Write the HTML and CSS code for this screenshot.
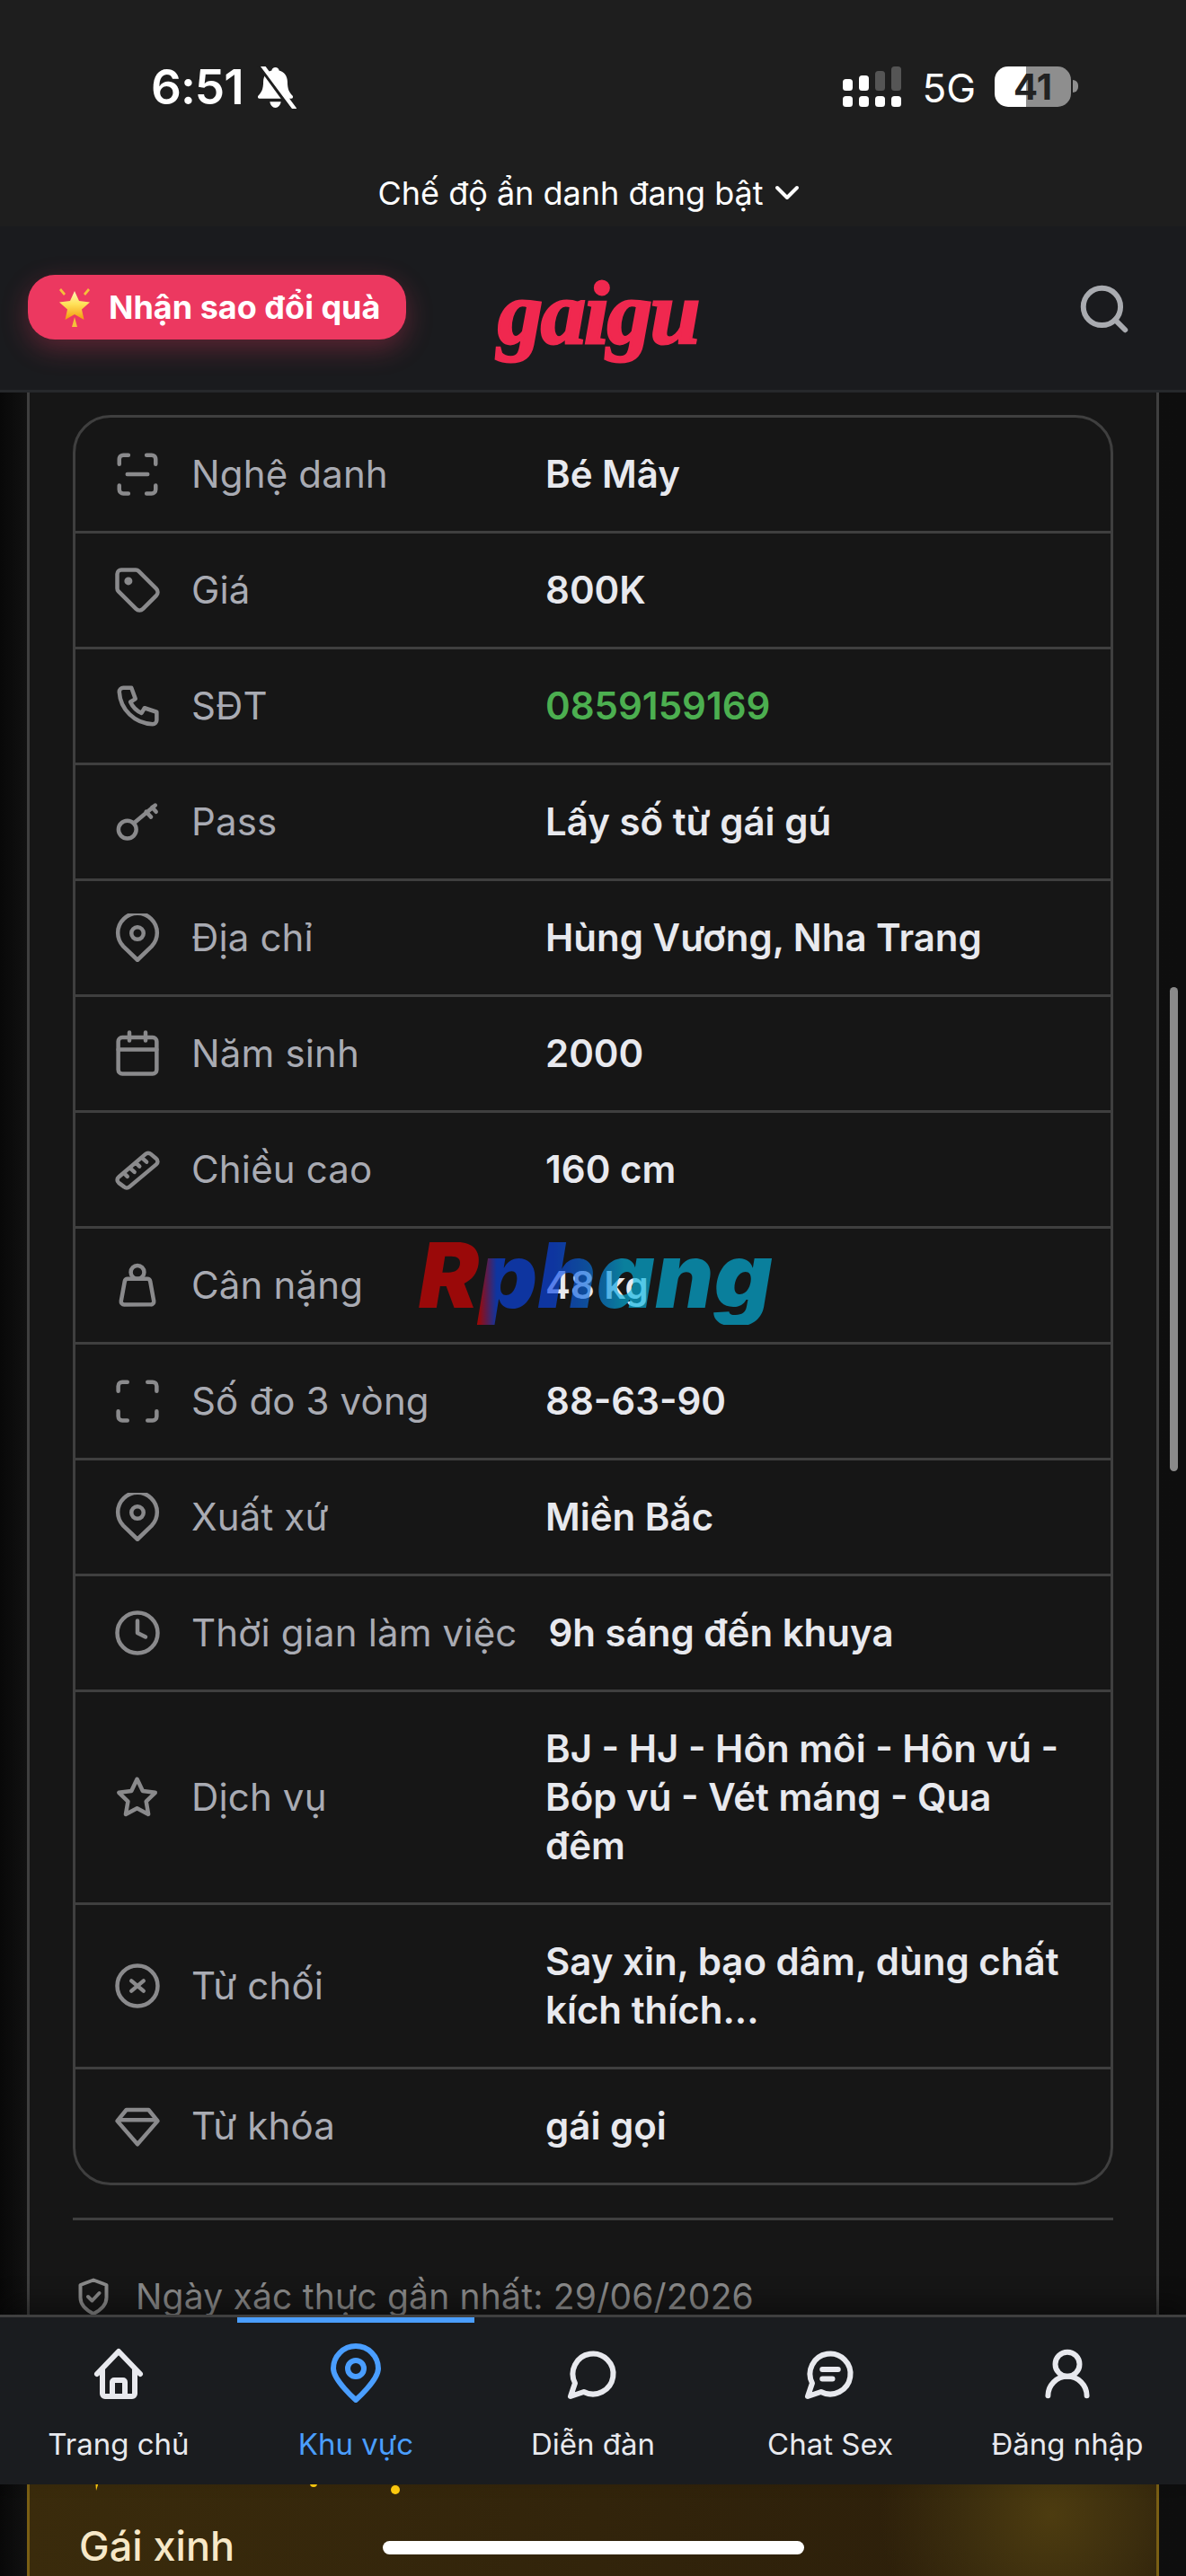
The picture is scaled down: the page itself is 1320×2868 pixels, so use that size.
FILE: index.html
```html
<!DOCTYPE html>
<html lang="vi">
<head>
<meta charset="utf-8">
<title>gaigu</title>
<link rel="stylesheet" href="styles.css">
</head>
<body>
<div class="page">
  <section class="status">
    <div class="status-row">
      <div class="status-left">
        <span class="time">6:51</span>
        <svg class="bell" viewBox="0 0 42 42"><path class="fill-w" d="M21 1c2 0 3.400 1.300 3.700 3 5.300 1.400 8.300 5.800 8.300 11 0 8 2 11 5 14 1 1 .5 3-1.200 3H5.200C3.500 32 3 30 4 29c3-3 5-6 5-14 0-5.200 3-9.600 8.300-11C17.600 2.300 19 1 21 1zM15.500 35h11c-.5 3.500-2.700 6-5.500 6s-5-2.500-5.500-6z"/><path class="slash-d" d="M5 -1 37 43"/><path class="slash-w" d="M8 -1 40 42"/></svg>
      </div>
      <div class="status-right">
        <svg class="signal" viewBox="0 0 65 45"><rect class="fill-w" x="0" y="14" width="11" height="13" rx="3.500"/><rect class="fill-w" x="18" y="10" width="11" height="17" rx="3.500"/><rect class="fill-dim" x="36" y="5" width="11" height="22" rx="3.500"/><rect class="fill-dim" x="54" y="0" width="11" height="27" rx="3.500"/><rect class="fill-w" x="0" y="33" width="11" height="12" rx="3.500"/><rect class="fill-w" x="18" y="33" width="11" height="12" rx="3.500"/><rect class="fill-w" x="36" y="33" width="11" height="12" rx="3.500"/><rect class="fill-w" x="54" y="33" width="11" height="12" rx="3.500"/></svg>
        <span class="net">5G</span>
        <div class="battery"><span class="battery-num">41</span></div>
        <span class="battery-nub"></span>
      </div>
    </div>
    <div class="incognito">
      <span>Chế độ ẩn danh đang bật</span>
      <svg class="chev" viewBox="0 0 28 20"><path d="M3 4 14 15 25 4"/></svg>
    </div>
  </section>

  <header class="topbar">
    <a class="promo">
      <svg class="promo-star" viewBox="0 0 42 44">
        <defs>
          <linearGradient id="sg" x1="0" y1="0" x2="0" y2="1"><stop offset="0" stop-color="#fff6b8"/><stop offset=".45" stop-color="#ffe25a"/><stop offset="1" stop-color="#f29a0c"/></linearGradient>
        </defs>
        <path fill="url(#sg)" d="M21 4l5 11 12 1.500-9 8 2.500 11.500L21 30l-10.500 6L13 24.500l-9-8L16 15z"/>
        <path fill="#f5c13a" d="M6 1l5 6-2 2-5-6zM36 1l-5 6 2 2 5-6zM21 33l3 11h-6z"/>
      </svg>
      <span>Nhận sao đổi quà</span>
    </a>
    <span class="logo">gaigu</span>
    <svg class="search" viewBox="0 0 24 24"><circle cx="11" cy="11" r="8"/><path d="m21 21-4.300-4.300"/></svg>
  </header>

  <main class="content">
    <article class="card">
      <div class="table">
        <div class="row">
          <svg class="ic" viewBox="0 0 24 24"><path d="M3 7V4.500A2 2 0 0 1 5 2.500h2.500M16.500 2.500H19a2 2 0 0 1 2 2V7M21 17.500V19.500a2 2 0 0 1-2 2h-2.500M7.500 21.500H5a2 2 0 0 1-2-2v-2M7 12h10"/></svg>
          <span class="lbl">Nghệ danh</span><span class="val">Bé Mây</span>
        </div>
        <div class="row">
          <svg class="ic" viewBox="0 0 24 24"><path d="M12.586 2.586A2 2 0 0 0 11.172 2H4a2 2 0 0 0-2 2v7.172a2 2 0 0 0 .586 1.414l8.704 8.704a2.426 2.426 0 0 0 3.420 0l6.580-6.580a2.426 2.426 0 0 0 0-3.420z"/><circle cx="7.500" cy="7.500" r="1"/></svg>
          <span class="lbl">Giá</span><span class="val">800K</span>
        </div>
        <div class="row">
          <svg class="ic" viewBox="0 0 24 24"><path d="M5 3h4l2 5.500-2.500 1.500a11 11 0 0 0 5.500 5.500l1.500-2.500 6 2v4a2 2 0 0 1-2 2A17 17 0 0 1 3 5a2 2 0 0 1 2-2"/></svg>
          <span class="lbl">SĐT</span><span class="val val-phone">0859159169</span>
        </div>
        <div class="row">
          <svg class="ic" viewBox="0 0 24 24"><circle cx="7" cy="15.800" r="4.400"/><path d="M10.200 12.700 20.800 3.800M16.300 7l2.400 2.600M19.200 4.800l2 2.200"/></svg>
          <span class="lbl">Pass</span><span class="val">Lấy số từ gái gú</span>
        </div>
        <div class="row">
          <svg class="ic" viewBox="0 0 24 24"><path d="M12 23 5 16.300A9.700 9.700 0 1 1 19 16.300z"/><circle cx="12" cy="9.800" r="3"/></svg>
          <span class="lbl">Địa chỉ</span><span class="val">Hùng Vương, Nha Trang</span>
        </div>
        <div class="row">
          <svg class="ic" viewBox="0 0 24 24"><rect x="2.500" y="4" width="19" height="18" rx="2"/><path d="M8 1.500v4M16 1.500v4M2.500 10h19"/></svg>
          <span class="lbl">Năm sinh</span><span class="val">2000</span>
        </div>
        <div class="row">
          <svg class="ic" viewBox="0 0 24 24"><path d="M2.700 15.800a1.800 1.800 0 0 0 0 2.800l2.700 2a2 2 0 0 0 2.600 0L21.300 9.500a1.800 1.800 0 0 0 0-2.800l-2.700-2.300a2 2 0 0 0-2.600 0zM8.500 11.500l2 1.800M11.500 9l1.500 1.500M14.500 6.500l2 1.800M5.500 14l1.500 1.500"/></svg>
          <span class="lbl">Chiều cao</span><span class="val">160 cm</span>
        </div>
        <div class="row">
          <svg class="ic" viewBox="0 0 24 24"><circle cx="12" cy="5.500" r="3.300"/><path d="M7.200 8.800h9.600a1.500 1.500 0 0 1 1.500 1.200l1.800 9.800a1.500 1.500 0 0 1-1.500 1.700h-13.200a1.500 1.500 0 0 1-1.500-1.700L5.700 10a1.500 1.500 0 0 1 1.500-1.200z"/></svg>
          <span class="lbl">Cân nặng</span><span class="val">48 kg</span>
        </div>
        <div class="row">
          <svg class="ic" viewBox="0 0 24 24"><path d="M2.500 7V4.500a2 2 0 0 1 2-2H7M17 2.500h2.500a2 2 0 0 1 2 2V7M21.500 17v2.500a2 2 0 0 1-2 2H17M7 21.500H4.500a2 2 0 0 1-2-2V17"/></svg>
          <span class="lbl">Số đo 3 vòng</span><span class="val">88-63-90</span>
        </div>
        <div class="row">
          <svg class="ic" viewBox="0 0 24 24"><path d="M12 23 5 16.300A9.700 9.700 0 1 1 19 16.300z"/><circle cx="12" cy="9.800" r="3"/></svg>
          <span class="lbl">Xuất xứ</span><span class="val">Miền Bắc</span>
        </div>
        <div class="row">
          <svg class="ic" viewBox="0 0 24 24"><circle cx="12" cy="12" r="10"/><path d="M12 6v6l4 2"/></svg>
          <span class="lbl lbl-long">Thời gian làm việc</span><span class="val">9h sáng đến khuya</span>
        </div>
        <div class="row">
          <svg class="ic" viewBox="0 0 24 24"><path d="M11.800 3l2.800 5.900 6.200.8-4.500 4.400 1.100 6.300-5.600-3-5.600 3 1.100-6.300-4.500-4.400 6.200-.8z"/></svg>
          <span class="lbl">Dịch vụ</span><span class="val">BJ - HJ - Hôn môi - Hôn vú - Bóp vú - Vét máng - Qua đêm</span>
        </div>
        <div class="row">
          <svg class="ic" viewBox="0 0 24 24"><circle cx="12" cy="12" r="10"/><path d="m15 9.500-6 5M9 9.500l6 5"/></svg>
          <span class="lbl">Từ chối</span><span class="val">Say xỉn, bạo dâm, dùng chất kích thích...</span>
        </div>
        <div class="row">
          <svg class="ic" viewBox="0 0 24 24"><path d="M6.500 4h11l4.500 5.500L12 21 2 9.500zM3 9h18"/></svg>
          <span class="lbl">Từ khóa</span><span class="val">gái gọi</span>
        </div>
      </div>
      <div class="watermark">Rphang</div>
      <hr class="divider">
      <div class="verified">
        <svg class="shield" viewBox="0 0 34 42"><path d="M17 2.500 31.500 8v14c0 9-6.500 14-14.500 18C9 36 2.500 31 2.500 22V8z"/><path d="m11 21 4.500 4.500L23.500 17"/></svg>
        <span>Ngày xác thực gần nhất: 29/06/2026</span>
      </div>
    </article>

    <article class="gold-card">
      <svg class="sparks" viewBox="0 0 400 30"><path class="spark" d="M23 0h5l-4 13z"/><circle class="spark" cx="266" cy="5" r="4"/><circle class="spark" cx="357" cy="12" r="5"/></svg>
      <span class="gold-title">Gái xinh</span>
    </article>
  </main>

  <div class="scrollbar"></div>

  <nav class="tabbar">
    <a class="tab">
      <svg class="tab-ic" viewBox="0 0 72 72"><path d="M12 36 36 11l24 25M18 31v27a3 3 0 0 0 3 3h30a3 3 0 0 0 3-3V31M29 61V45a2 2 0 0 1 2-2h10a2 2 0 0 1 2 2v16"/></svg>
      <span>Trang chủ</span>
    </a>
    <a class="tab tab-on">
      <svg class="tab-ic" viewBox="0 0 72 72"><path d="M36 65C36 65 11 43 11 30a25 25 0 0 1 50 0C61 43 36 65 36 65z"/><circle cx="36" cy="30" r="9"/></svg>
      <span>Khu vực</span>
    </a>
    <a class="tab">
      <svg class="tab-ic" viewBox="0 0 72 72"><g transform="translate(6 6) scale(2.500)"><path class="thin" d="M7.900 20A9 9 0 1 0 4 16.100L2 22Z"/></g></svg>
      <span>Diễn đàn</span>
    </a>
    <a class="tab">
      <svg class="tab-ic" viewBox="0 0 72 72"><g transform="translate(6 6) scale(2.500)"><path class="thin" d="M7.900 20A9 9 0 1 0 4 16.100L2 22Z"/><path class="thin" d="M8.500 10h7M8.500 14.200h4.500"/></g></svg>
      <span>Chat Sex</span>
    </a>
    <a class="tab">
      <svg class="tab-ic" viewBox="0 0 72 72"><g transform="translate(3.600 3.600) scale(2.700)"><circle class="thin2" cx="12" cy="8" r="5"/><path class="thin2" d="M20 21a8 8 0 0 0-16 0"/></g></svg>
      <span>Đăng nhập</span>
    </a>
  </nav>
  <div class="home-bar"></div>
</div>
</body>
</html>
```

FILE: styles.css
```css
* { box-sizing: border-box; margin: 0; padding: 0; }
html, body { width: 1320px; height: 2868px; overflow: hidden; background: #0e0e0e; }
body { font-family: Inter, "Noto Sans", sans-serif; color: #e8e9ee; }

.page { position: relative; width: 1320px; height: 2868px; overflow: hidden; display: flex; flex-direction: column; background: linear-gradient(90deg, #080808 0, #111 30px, #0e0e0e 100%); }

/* status */
.status { height: 252px; background: #1e1e1e; flex: none; padding-top: 74px; }
.status-row { display: flex; justify-content: space-between; height: 46px; padding: 0 120px 0 168px; }
.status-left { display: flex; align-items: center; gap: 12px; }
.time { font-size: 53px; font-weight: 600; color: #fff; letter-spacing: -1px; line-height: 46px; }
.bell { width: 47px; height: 47px; flex: none; }
.fill-w { fill: #fff; }
.fill-dim { fill: #555; }
.slash-d { stroke: #1e1e1e; stroke-width: 4; }
.slash-w { stroke: #fff; stroke-width: 4; stroke-linecap: round; }
.status-right { display: flex; align-items: flex-start; }
.signal { width: 65px; height: 45px; }
.net { font-size: 44px; font-weight: 400; color: #fff; line-height: 44px; margin: 2px 0 0 23px; }
.battery { width: 85px; height: 45px; border-radius: 15px; margin-left: 21px; background: linear-gradient(90deg, #fff 0, #fff 35px, #8e8e8e 35px, #8e8e8e 100%); text-align: center; }
.battery-num { font-size: 40px; font-weight: 700; color: #222; line-height: 45px; }
.battery-nub { width: 6px; height: 14px; border-radius: 0 7px 7px 0; background: #8e8e8e; margin: 15px 0 0 2px; }
.incognito { display: flex; align-items: center; justify-content: center; gap: 12px; margin-top: 72px; padding-right: 10px; color: #fff; font-size: 36px; line-height: 46px; }
.chev { width: 28px; height: 20px; fill: none; stroke: #fff; stroke-width: 4; stroke-linecap: round; stroke-linejoin: round; }

/* header */
.topbar { height: 185px; flex: none; background: #1a1b1e; border-bottom: 3px solid #26282b; display: flex; align-items: center; padding: 0 60px 2px 31px; }
.promo { width: 421px; height: 72px; flex: none; border-radius: 30px; background: #ec3860; box-shadow: 0 10px 30px rgba(236, 56, 96, .32); display: flex; align-items: center; padding-left: 31px; gap: 17px; color: #fff; font-size: 36px; font-weight: 700; white-space: nowrap; }
.promo-star { width: 42px; height: 44px; flex: none; }
.logo { margin: 14px 0 0 102px; font-family: "Liberation Serif", serif; font-style: italic; font-weight: 700; font-size: 100px; line-height: 90px; color: #f0284f; -webkit-text-stroke: 3px #f0284f; letter-spacing: -2px; }
.search { width: 62px; height: 62px; margin: 4px 0 0 auto; fill: none; stroke: #a9abb0; stroke-width: 2.300; stroke-linecap: round; }

/* content */
.content { flex: 1; padding: 0 30px; display: flex; flex-direction: column; gap: 40px; min-height: 0; }
.card { position: relative; flex: none; height: 2240px; background: #161616; border-left: 3px solid #3f3f3f; border-right: 3px solid #3f3f3f; padding: 25px 48px 0; }
.table { border: 3px solid #3f3f3f; border-radius: 42px; }
.row { display: flex; align-items: center; padding: 36px 42px; gap: 35px; border-bottom: 3px solid #3f3f3f; }
.row:last-child { border-bottom: 0; }
.ic { width: 54px; height: 54px; flex: none; margin-right: -2px; fill: none; stroke: #8a8a8c; stroke-width: 2; stroke-linecap: round; stroke-linejoin: round; }
.lbl { min-width: 359px; font-size: 42px; line-height: 54px; letter-spacing: .15px; color: #a9abb3; white-space: nowrap; }
.lbl-long { min-width: 361px; }
.val { font-size: 42px; line-height: 54px; font-weight: 600; color: #e8e9ee; }
.val-phone { color: #4caf50; }
.watermark { position: absolute; left: 433px; top: 928px; font-size: 100px; line-height: 110px; font-weight: 900; font-style: italic; letter-spacing: .6px; opacity: .65; background: linear-gradient(90deg, #e10303 0, #e10303 17%, #0a46ea 22%, #0a46ea 38%, #0a6ee0 48%, #04b7e4 58%, #04b7e4 100%); -webkit-background-clip: text; background-clip: text; color: transparent; }
.divider { border: 0; height: 3px; background: #3f3f3f; margin-top: 36px; }
.verified { display: flex; align-items: center; gap: 30px; margin-top: 62px; padding-left: 6px; font-size: 39px; line-height: 46px; letter-spacing: .2px; color: #8a8a8a; }
.shield { width: 34px; height: 42px; flex: none; fill: none; stroke: #8a8a8a; stroke-width: 4; stroke-linecap: round; stroke-linejoin: round; }

/* gold card */
.gold-card { position: relative; flex: none; height: 400px; border: 3px solid #7a5f14; padding: 88px 0 0 55px; background: radial-gradient(circle at 1137px 80px, #4d3c10 0, #3b2d0e 100px, rgba(42, 29, 10, 0) 190px), linear-gradient(90deg, #3a2b0c 0, #2a1d0a 100%); }
.sparks { position: absolute; left: 50px; top: 40px; width: 400px; height: 30px; }
.spark { fill: #ffcb0f; }
.gold-title { font-size: 45px; line-height: 54px; font-weight: 500; color: #f7e8c8; }

/* scrollbar */
.scrollbar { position: absolute; left: 1302px; top: 1099px; width: 9px; height: 539px; border-radius: 5px; background: #8a8a8a; }

/* tabs */
.tabbar { position: absolute; left: 0; top: 2577px; width: 1320px; height: 189px; background: #1a1c1f; border-top: 3px solid #3f3f3f; display: grid; grid-template-columns: repeat(5, 264px); box-shadow: 0 -14px 24px rgba(0, 0, 0, .35); }
.tab { display: flex; flex-direction: column; align-items: center; padding-top: 27px; color: #e8e9ee; font-size: 33px; line-height: 44px; position: relative; }
.tab-ic { width: 72px; height: 72px; fill: none; stroke: currentColor; stroke-width: 6; stroke-linecap: round; stroke-linejoin: round; margin-bottom: 20px; }
.thin { stroke-width: 2.400; }
.thin2 { stroke-width: 2.200; }
.tab-on { color: #4a9eff; }
.tab-on::before { content: ""; position: absolute; left: 0; right: 0; top: 0; height: 6px; background: #4a9eff; }
.home-bar { position: absolute; left: 426px; top: 2829px; width: 469px; height: 15px; border-radius: 8px; background: #fff; }
```
